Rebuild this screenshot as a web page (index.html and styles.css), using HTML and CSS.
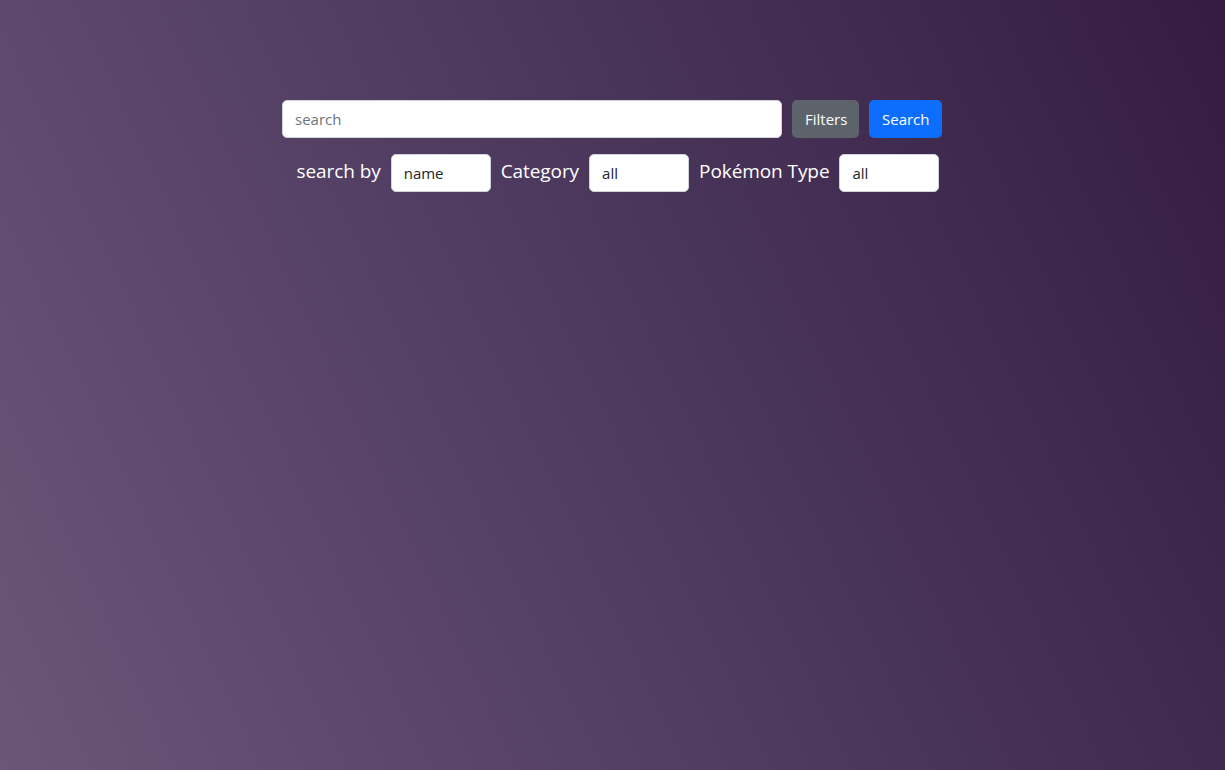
FILE: index.html
```html
<!DOCTYPE html>
<html lang="en">
<head>
<meta charset="utf-8">
<title>Pokédex search</title>
<link rel="stylesheet" href="styles.css">
</head>
<body>
<main class="page">
  <form class="search-form">
    <div class="search-row">
      <input class="control search-input" type="text" placeholder="search">
      <button type="button" class="btn btn-secondary">Filters</button>
      <button type="button" class="btn btn-primary">Search</button>
    </div>
    <div class="filter-row">
      <label class="filter-label">search by</label>
      <input class="control small-input" type="text" value="name">
      <label class="filter-label">Category</label>
      <input class="control small-input" type="text" value="all">
      <label class="filter-label">Pokémon Type</label>
      <input class="control small-input" type="text" value="all">
    </div>
  </form>
</main>
</body>
</html>
```
FILE: styles.css
```css
html, body {
  margin: 0;
  padding: 0;
  height: 100%;
}
body {
  font-family: "Open Sans", "Noto Sans", "Liberation Sans", sans-serif;
  background: linear-gradient(65deg, #6b5678 0%, #4e3a5f 50%, #341c40 100%);
  color: #fff;
}
.page {
  min-height: 100%;
  padding-top: 100px;
  box-sizing: border-box;
}
.search-form {
  display: flex;
  flex-direction: column;
  align-items: center;
  gap: 16px;
}
.search-row {
  display: flex;
  gap: 10px;
  margin-right: 1px;
}
.filter-row {
  display: flex;
  align-items: center;
  gap: 10px;
  margin-left: 11px;
}
.control {
  box-sizing: border-box;
  height: 38px;
  border: 1px solid #ced4da;
  border-radius: 5px;
  background: #fff;
  padding: 6px 12px;
  font-family: inherit;
  font-size: 15px;
  color: #212529;
  outline: none;
}
.control::placeholder {
  color: #6c757d;
}
.search-input {
  width: 500px;
}
.small-input {
  width: 100px;
}
.btn {
  box-sizing: border-box;
  height: 38px;
  border: 1px solid transparent;
  border-radius: 5px;
  padding: 0 12px;
  font-family: inherit;
  font-size: 15px;
  color: #fff;
  cursor: pointer;
}
.btn-secondary {
  background: #5c636a;
  width: 67px;
}
.btn-primary {
  background: #0d6efd;
  width: 73px;
}
.filter-label {
  font-size: 19px;
  line-height: 1;
  letter-spacing: -0.08px;
  color: #fff;
  margin-top: -4px;
}
```
